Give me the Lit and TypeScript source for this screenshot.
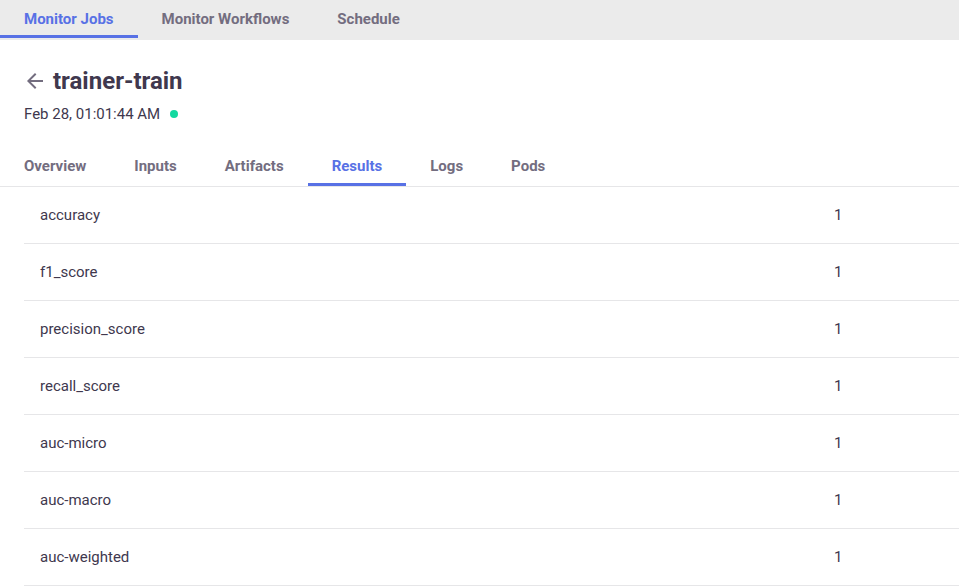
import { LitElement, html, css } from "lit";
import { customElement, property } from "lit/decorators.js";
import { classMap } from "lit/directives/class-map.js";

@customElement("tab-bar")
class TabBar extends LitElement {
  @property({ attribute: false }) tabs: string[] = [];
  @property() active = "";
  @property() label = "";

  static styles = css`
    :host { display: block; }
    nav { display: flex; height: var(--bar-height, 40px); }
    a {
      box-sizing: border-box;
      height: var(--tab-height, 38px);
      padding: 0 24px;
      border-bottom: 3px solid transparent;
      color: #736d7f;
      font-size: 15px;
      font-weight: 700;
      line-height: var(--tab-line, 38px);
      text-decoration: none;
      white-space: nowrap;
    }
    a.active { color: #5871e5; border-bottom-color: #5871e5; }
  `;

  render() {
    return html`<nav aria-label=${this.label}>
      ${this.tabs.map((t) => html`<a href="#" class=${classMap({ active: t === this.active })}>${t}</a>`)}
    </nav>`;
  }
}

@customElement("app-root")
class AppRoot extends LitElement {
  static styles = css`
    :host {
      display: block;
      min-height: 100vh;
      background: #fff;
      color: #40384e;
      font-family: Roboto, "Liberation Sans", sans-serif;
      font-size: 15px;
    }
    .pages { background: #ebebeb; }
    header { padding: 26px 24px 0; }
    .title { display: flex; align-items: center; gap: 8px; height: 30px; }
    .back { display: flex; padding: 0; width: 21px; }
    .back svg { display: block; }
    h1 { margin: 0; font-size: 24px; line-height: 30px; font-weight: 700; }
    .status { display: flex; align-items: center; gap: 10px; margin-top: 8px; line-height: 20px; }
    .dot { width: 8px; height: 8px; border-radius: 50%; background: #13d9a0; }
    .sections {
      --bar-height: 42px;
      --tab-height: 42px;
      --tab-line: 44px;
      margin-top: 20px;
      border-bottom: 1px solid #e6e6e8;
    }
    .results { padding-left: 24px; }
    table { width: 100%; border-collapse: separate; border-spacing: 0; table-layout: fixed; }
    th, td {
      box-sizing: border-box;
      height: 57px;
      padding: 0 16px;
      border-bottom: 1px solid #e6e6e8;
      font-weight: 400;
      text-align: left;
    }
    .value { width: 141px; }
  `;

  private results: [string, number][] = [
    ["accuracy", 1],
    ["f1_score", 1],
    ["precision_score", 1],
    ["recall_score", 1],
    ["auc-micro", 1],
    ["auc-macro", 1],
    ["auc-weighted", 1],
  ];

  render() {
    return html`
      <tab-bar class="pages" label="Pages" active="Monitor Jobs"
        .tabs=${["Monitor Jobs", "Monitor Workflows", "Schedule"]}></tab-bar>
      <main>
        <header>
          <div class="title">
            <a class="back" href="#" aria-label="Back">
              <svg width="21" height="24" viewBox="0 0 21 24" fill="#736d7f">
                <path d="M19 11.1H6.8L12.4 5.4L11 4L3 12L11 20L12.4 18.6L6.8 12.9H19Z" />
              </svg>
            </a>
            <h1>trainer-train</h1>
          </div>
          <div class="status">
            <span>Feb 28, 01:01:44 AM</span>
            <span class="dot" role="img" aria-label="Completed"></span>
          </div>
        </header>
        <tab-bar class="sections" label="Job details" active="Results"
          .tabs=${["Overview", "Inputs", "Artifacts", "Results", "Logs", "Pods"]}></tab-bar>
        <div class="results">
          <table>
            <tbody>
              ${this.results.map(([name, value]) => html`<tr>
                <th scope="row">${name}</th>
                <td class="value">${value}</td>
              </tr>`)}
            </tbody>
          </table>
        </div>
      </main>
    `;
  }
}
